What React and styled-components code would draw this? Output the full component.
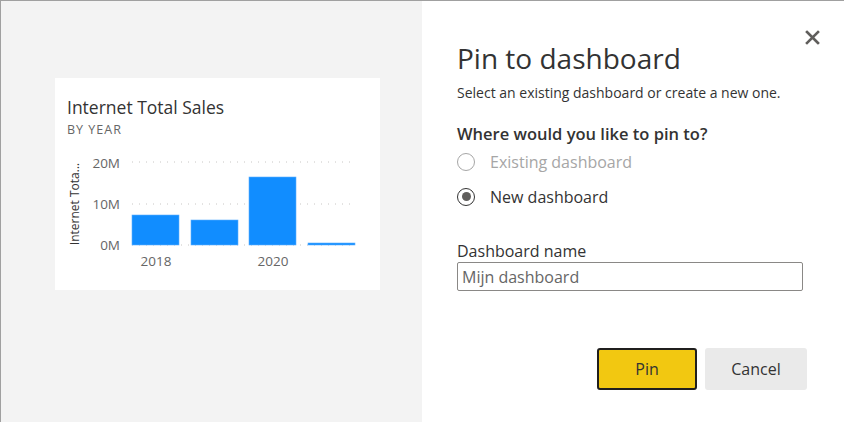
import React from 'react';
import styled, { createGlobalStyle } from 'styled-components';

const GlobalStyle = createGlobalStyle`
  html, body {
    margin: 0;
    padding: 0;
    background: #ffffff;
  }
  body {
    font-family: "Open Sans", "Noto Sans", sans-serif;
    color: #252423;
  }
`;

const Frame = styled.div`
  box-sizing: border-box;
  width: 844px;
  height: 422px;
  display: flex;
  border-top: 1px solid #a0a0a0;
  border-left: 1px solid #a0a0a0;
  overflow: hidden;
`;

const Preview = styled.div`
  box-sizing: border-box;
  width: 421px;
  flex-shrink: 0;
  background: #f3f3f3;
  padding: 77px 0 0 54px;
`;

const Card = styled.div`
  box-sizing: border-box;
  width: 325px;
  height: 212px;
  background: #ffffff;
  padding: 18px 0 0 12px;
  display: flex;
  flex-direction: column;
`;

const CardTitle = styled.div`
  font-size: 17.5px;
  line-height: 23px;
  color: #333333;
`;

const CardSubtitle = styled.div`
  margin-top: 3px;
  font-size: 12.5px;
  line-height: 16px;
  letter-spacing: 1px;
  color: #666666;
  text-transform: uppercase;
`;

const ChartSvg = styled.svg`
  display: block;
  margin-top: 0;
  text {
    font-family: "Open Sans", "Noto Sans", sans-serif;
  }
`;

const Dialog = styled.div`
  position: relative;
  flex: 1;
  background: #ffffff;
  padding: 39px 37px 0 35px;
  display: flex;
  flex-direction: column;
`;

const CloseButton = styled.button`
  position: absolute;
  top: 26px;
  right: 22px;
  width: 20px;
  height: 20px;
  padding: 0;
  border: 0;
  background: transparent;
  display: flex;
  align-items: center;
  justify-content: center;
  cursor: pointer;
`;

const Title = styled.h1`
  margin: 0;
  font-size: 28px;
  line-height: 36px;
  font-weight: 400;
  color: #333333;
`;

const Subtitle = styled.p`
  margin: 7px 0 0;
  font-size: 14px;
  line-height: 19px;
  color: #333333;
`;

const Question = styled.div`
  margin-top: 21px;
  font-size: 16.5px;
  line-height: 22px;
  font-weight: 600;
  color: #333333;
`;

const Options = styled.div`
  margin-top: -1px;
  display: flex;
  flex-direction: column;
`;

const Option = styled.label`
  display: flex;
  align-items: center;
  gap: 15px;
  height: 35px;
  font-size: 16px;
  color: ${p => (p.$disabled ? '#a6a6a6' : '#333333')};
  cursor: ${p => (p.$disabled ? 'default' : 'pointer')};
`;

const RadioCircle = styled.span`
  box-sizing: border-box;
  width: 18px;
  height: 18px;
  border-radius: 50%;
  border: 1.5px solid ${p => (p.$disabled ? '#a6a6a6' : '#333333')};
  display: flex;
  align-items: center;
  justify-content: center;
  &::after {
    content: '';
    width: 9px;
    height: 9px;
    border-radius: 50%;
    background: ${p => (p.$checked ? '#605e5c' : 'transparent')};
  }
`;

const FieldLabel = styled.label`
  margin-top: 27px;
  font-size: 16px;
  line-height: 21px;
  color: #333333;
`;

const TextInput = styled.input`
  box-sizing: border-box;
  width: 346px;
  height: 29px;
  margin: 0;
  padding: 0 4px;
  border: 1px solid #8a8886;
  border-radius: 2px;
  font-family: "Open Sans", "Noto Sans", sans-serif;
  font-size: 16px;
  color: #333333;
  outline: none;
  &::placeholder {
    color: #666666;
  }
`;

const Actions = styled.div`
  margin-top: 57px;
  display: flex;
  justify-content: flex-end;
  gap: 8px;
`;

const Button = styled.button`
  box-sizing: border-box;
  width: ${p => (p.$primary ? '100px' : '102px')};
  height: 42px;
  border-radius: 3px;
  border: ${p => (p.$primary ? '2px solid #201f1e' : '0')};
  background: ${p => (p.$primary ? '#f2c811' : '#eaeaea')};
  font-family: "Open Sans", "Noto Sans", sans-serif;
  font-size: 16px;
  color: #333333;
  cursor: pointer;
`;

const bars = [
  { year: 2018, x: 65, y: 77 },
  { year: 2019, x: 124, y: 82 },
  { year: 2020, x: 182, y: 39 },
  { year: 2021, x: 241, y: 105 },
];

const ticks = [
  { label: '20M', y: 24, base: 30 },
  { label: '10M', y: 66, base: 71 },
  { label: '0M', y: 107, base: 112 },
];

const SalesChart = () => (
  <ChartSvg width="313" height="140" viewBox="0 0 313 140">
    <text
      transform="translate(12 66) rotate(-90)"
      textAnchor="middle"
      fontSize="12"
      fill="#333333"
    >
      Internet Tota...
    </text>
    {ticks.map(t => (
      <g key={t.label}>
        <line x1="65" x2="288" y1={t.y} y2={t.y} stroke="#c8c6c4" strokeWidth="1" strokeDasharray="1 6" />
        <text x="53" y={t.base} textAnchor="end" fontSize="13.5" fill="#666666">
          {t.label}
        </text>
      </g>
    ))}
    {bars.map(b => (
      <rect
        key={b.year}
        x={b.x}
        y={b.y}
        width="47"
        height={107 - b.y}
        fill="#118dff"
        stroke="#5eb0ff"
        strokeWidth="0.6"
      />
    ))}
    <text x="89" y="128" textAnchor="middle" fontSize="13.5" fill="#666666">2018</text>
    <text x="206" y="128" textAnchor="middle" fontSize="13.5" fill="#666666">2020</text>
  </ChartSvg>
);

const App = () => {
  return (
    <>
      <GlobalStyle />
      <Frame>
        <Preview>
          <Card>
            <CardTitle>Internet Total Sales</CardTitle>
            <CardSubtitle>By year</CardSubtitle>
            <SalesChart />
          </Card>
        </Preview>
        <Dialog>
          <CloseButton aria-label="Close">
            <svg width="15" height="15" viewBox="0 0 15 15">
              <path d="M2 2 L13 13 M13 2 L2 13" stroke="#605e5c" strokeWidth="2.6" strokeLinecap="square" />
            </svg>
          </CloseButton>
          <Title>Pin to dashboard</Title>
          <Subtitle>Select an existing dashboard or create a new one.</Subtitle>
          <Question>Where would you like to pin to?</Question>
          <Options>
            <Option $disabled>
              <RadioCircle $disabled />
              Existing dashboard
            </Option>
            <Option>
              <RadioCircle $checked />
              New dashboard
            </Option>
          </Options>
          <FieldLabel htmlFor="dash-name">Dashboard name</FieldLabel>
          <TextInput id="dash-name" placeholder="Mijn dashboard" />
          <Actions>
            <Button $primary>Pin</Button>
            <Button>Cancel</Button>
          </Actions>
        </Dialog>
      </Frame>
    </>
  );
};

export default App;
